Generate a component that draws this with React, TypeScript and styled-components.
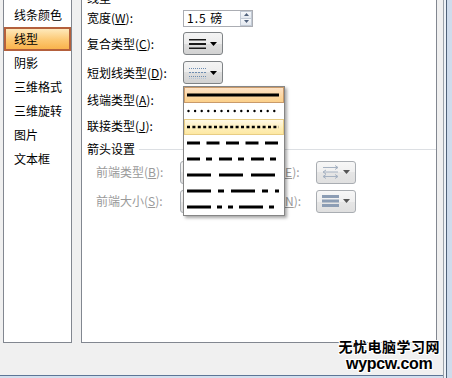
import React from "react";
import styled, { createGlobalStyle, css } from "styled-components";

const Global = createGlobalStyle`
  html, body { margin: 0; padding: 0; background: #f0f0f0; }
  body {
    font-family: "Noto Sans CJK SC", "Liberation Sans", sans-serif;
    font-size: 12px;
    color: #000;
  }
  * { box-sizing: border-box; }
`;

const Window = styled.div`
  position: relative;
  width: 452px;
  height: 378px;
  display: flex;
  background: #f0f0f0;
  overflow: hidden;
`;

const Client = styled.div`
  flex: 1;
  display: flex;
  flex-direction: column;
`;

const Panes = styled.div`
  flex: 1;
  display: flex;
  align-items: flex-start;
  gap: 9px;
  padding-left: 3px;
`;

const BottomEdge = styled.div`
  height: 3px;
  background: linear-gradient(#5d7696 0 1px, #d3dfee 1px);
`;

const Frame = styled.div`
  width: 9px;
  background: linear-gradient(
    to right,
    #9ba2aa 0 1px,
    #eef2f7 1px 3px,
    #4f6279 3px 4px,
    #cfdcec 4px
  );
`;

const NavPanel = styled.div`
  width: 69px;
  height: 343px;
  background: #fff;
  border: 1px solid #828790;
  border-top: none;
  padding-top: 3px;
  display: flex;
  flex-direction: column;
`;

const NavItem = styled.div<{ $selected?: boolean }>`
  height: 24px;
  display: flex;
  align-items: center;
  padding-left: 8px;
  border: 2px solid transparent;
  line-height: 1;
  ${(p) =>
    p.$selected &&
    css`
      border-color: #b4603c;
      background: linear-gradient(#fee9bb, #fcc873 55%, #f9b34c);
    `}
`;

const SettingsPanel = styled.div`
  width: 356px;
  height: 343px;
  background: #fff;
  border: 1px solid #828790;
  border-top: none;
  padding-left: 5px;
  display: flex;
  flex-direction: column;
`;

const Row = styled.div<{ $h: number; $mt: number; $end?: boolean }>`
  display: flex;
  align-items: ${(p) => (p.$end ? "flex-end" : "center")};
  height: ${(p) => p.$h}px;
  margin-top: ${(p) => p.$mt}px;
  line-height: 12px;
`;

const Label = styled.div<{ $w: number; $muted?: boolean; $indent?: number }>`
  width: ${(p) => p.$w}px;
  margin-left: ${(p) => p.$indent ?? 0}px;
  color: ${(p) => (p.$muted ? "#9a9a9a" : "#000")};
  white-space: nowrap;
  flex-shrink: 0;
`;

const U = styled.span`
  text-decoration: underline;
`;

const SectionTitle = styled.div`
  white-space: nowrap;
`;

const Rule = styled.div`
  flex: 1;
  height: 1px;
  margin-left: 4px;
  background: #dcdfe3;
`;

const Spinner = styled.div`
  width: 70px;
  height: 17px;
  border: 1px solid #abadb3;
  display: flex;
  align-items: center;
  padding-left: 3px;
  background: #fff;
`;

const SpinText = styled.div`
  flex: 1;
  letter-spacing: 1px;
  line-height: 1;
`;

const SpinButtons = styled.div`
  width: 12px;
  height: 15px;
  display: flex;
  flex-direction: column;
`;

const SpinBtn = styled.div`
  flex: 1;
  display: flex;
  align-items: center;
  justify-content: center;
  border: 1px solid #c2cad5;
  background: linear-gradient(#f6f8fb, #e3e8ef);
  & + & {
    border-top: none;
  }
`;

const Anchor = styled.div`
  position: relative;
`;

const DropButton = styled.div<{ $disabled?: boolean }>`
  width: 40px;
  height: 23px;
  border: 1px solid ${(p) => (p.$disabled ? "#a9adb2" : "#7f8386")};
  border-radius: 3px;
  display: flex;
  align-items: center;
  justify-content: space-between;
  padding: 0 5px 0 5px;
  background: ${(p) =>
    p.$disabled
      ? "linear-gradient(#f7f7f7, #efefef 50%, #e6e6e6 50%, #e0e0e0)"
      : "linear-gradient(#f4f4f4, #ececec 50%, #dedede 50%, #d2d2d2)"};
  flex-shrink: 0;
`;

const Menu = styled.div`
  position: absolute;
  top: 25px;
  left: 0;
  width: 102px;
  background: #fff;
  border: 1px solid #868686;
  box-shadow: 2px 2px 3px rgba(0, 0, 0, 0.35);
  z-index: 10;
  display: flex;
  flex-direction: column;
`;

const MenuItem = styled.div<{ $state?: "selected" | "hover" }>`
  height: 16px;
  display: flex;
  align-items: center;
  padding-left: 2px;
  border: 1px solid transparent;
  ${(p) =>
    p.$state === "selected" &&
    css`
      border-color: #c99a6a;
      background: linear-gradient(#fde2c6, #fcd6a0 60%, #fbd08a);
    `}
  ${(p) =>
    p.$state === "hover" &&
    css`
      border-color: #e8cd84;
      background: linear-gradient(#fff9e6, #feeeb8 60%, #fde8a2);
    `}
`;

const Watermark = styled.div`
  position: absolute;
  right: 12px;
  bottom: 6px;
  display: flex;
  flex-direction: column;
  align-items: center;
  gap: 2px;
  z-index: 20;
  color: #000;
  font-weight: bold;
  text-shadow: 1px 0 #fff, -1px 0 #fff, 0 1px #fff, 0 -1px #fff, 1px 1px #fff,
    -1px -1px #fff, 1px -1px #fff, -1px 1px #fff;
`;

const WmCn = styled.div`
  font-family: "Noto Sans CJK SC", sans-serif;
  font-size: 14px;
  line-height: 16px;
  letter-spacing: 0.5px;
`;

const WmEn = styled.div`
  font-family: "Liberation Sans", Arial, sans-serif;
  font-size: 16px;
  line-height: 16px;
  letter-spacing: -0.3px;
`;

const Arrow = ({ color = "#000" }: { color?: string }) => (
  <svg width="7" height="4" viewBox="0 0 7 4">
    <path d="M0 0 H7 L3.5 4 Z" fill={color} />
  </svg>
);

const CompoundIcon = () => (
  <svg width="18" height="14" viewBox="0 0 18 14">
    <rect x="0" y="2" width="17" height="1.5" fill="#1a1a1a" />
    <rect x="0" y="6" width="17" height="2" fill="#1a1a1a" />
    <rect x="0" y="10.5" width="17" height="1.5" fill="#1a1a1a" />
  </svg>
);

const DashIcon = () => (
  <svg width="18" height="14" viewBox="0 0 18 14">
    <line x1="0" y1="2.5" x2="17" y2="2.5" stroke="#6d8cb0" strokeWidth="1" strokeDasharray="1 1" />
    <line x1="0" y1="6.5" x2="17" y2="6.5" stroke="#6d8cb0" strokeWidth="1" strokeDasharray="2 1" />
    <line x1="0" y1="10.5" x2="17" y2="10.5" stroke="#6d8cb0" strokeWidth="1" strokeDasharray="1 1" />
    <line x1="0" y1="12.5" x2="17" y2="12.5" stroke="#b7c6d8" strokeWidth="1" strokeDasharray="1 1" />
  </svg>
);

const ArrowTypeIcon = () => (
  <svg width="18" height="14" viewBox="0 0 18 14">
    <g stroke="#a6b2c2" strokeWidth="1" fill="none">
      <line x1="1" y1="2.5" x2="16" y2="2.5" />
      <path d="M13 0.5 L16 2.5 L13 4.5" />
      <line x1="1" y1="7" x2="16" y2="7" />
      <path d="M4 5 L1 7 L4 9" />
      <line x1="1" y1="11.5" x2="16" y2="11.5" />
      <path d="M4 9.5 L1 11.5 L4 13.5" />
      <path d="M13 9.5 L16 11.5 L13 13.5" />
    </g>
  </svg>
);

const ArrowSizeIcon = () => (
  <svg width="18" height="14" viewBox="0 0 18 14">
    <rect x="0" y="1" width="17" height="3" fill="#8c9db4" />
    <rect x="0" y="5.5" width="17" height="3" fill="#8c9db4" />
    <rect x="0" y="10" width="17" height="3" fill="#8c9db4" />
  </svg>
);

const TinyTri = ({ up }: { up?: boolean }) => (
  <svg width="5" height="3" viewBox="0 0 5 3">
    <path d={up ? "M0 3 H5 L2.5 0 Z" : "M0 0 H5 L2.5 3 Z"} fill="#51627c" />
  </svg>
);

type Pattern = { dash?: string; width: number; cap?: "butt" | "round" };

const patterns: Pattern[] = [
  { width: 3 },
  { width: 2.4, dash: "0 6.6", cap: "round" },
  { width: 2.6, dash: "3 2.4" },
  { width: 3, dash: "13 6.5" },
  { width: 3, dash: "13 6 6 7" },
  { width: 3, dash: "24 8" },
  { width: 3, dash: "24 7 6 7" },
  { width: 3, dash: "24 6 5 6 5 6" },
];

const LineSample = ({ p }: { p: Pattern }) => (
  <svg width="92" height="6" viewBox="0 0 92 6">
    <line
      x1={p.cap === "round" ? 1.5 : 0}
      y1="3"
      x2="92"
      y2="3"
      stroke="#000"
      strokeWidth={p.width}
      strokeDasharray={p.dash}
      strokeLinecap={p.cap ?? "butt"}
    />
  </svg>
);

const navItems = ["线条颜色", "线型", "阴影", "三维格式", "三维旋转", "图片", "文本框"];

export default function App() {
  return (
    <>
      <Global />
      <Window>
        <Client>
          <Panes>
            <NavPanel>
              {navItems.map((t) => (
                <NavItem key={t} $selected={t === "线型"}>
                  {t}
                </NavItem>
              ))}
            </NavPanel>
            <SettingsPanel>
              <Row $h={4} $mt={0} $end>
                <SectionTitle>线型</SectionTitle>
              </Row>
              <Row $h={20} $mt={4}>
                <Label $w={96}>
                  宽度(<U>W</U>):
                </Label>
                <Spinner>
                  <SpinText>1.5 磅</SpinText>
                  <SpinButtons>
                    <SpinBtn>
                      <TinyTri up />
                    </SpinBtn>
                    <SpinBtn>
                      <TinyTri />
                    </SpinBtn>
                  </SpinButtons>
                </Spinner>
              </Row>
              <Row $h={23} $mt={4}>
                <Label $w={96}>
                  复合类型(<U>C</U>):
                </Label>
                <DropButton>
                  <CompoundIcon />
                  <Arrow />
                </DropButton>
              </Row>
              <Row $h={23} $mt={6}>
                <Label $w={96}>
                  短划线类型(<U>D</U>):
                </Label>
                <Anchor>
                  <DropButton>
                    <DashIcon />
                    <Arrow />
                  </DropButton>
                  <Menu>
                    {patterns.map((p, i) => (
                      <MenuItem
                        key={i}
                        $state={i === 0 ? "selected" : i === 2 ? "hover" : undefined}
                      >
                        <LineSample p={p} />
                      </MenuItem>
                    ))}
                  </Menu>
                </Anchor>
              </Row>
              <Row $h={22} $mt={5}>
                <Label $w={96}>
                  线端类型(<U>A</U>):
                </Label>
              </Row>
              <Row $h={22} $mt={4}>
                <Label $w={96}>
                  联接类型(<U>J</U>):
                </Label>
              </Row>
              <Row $h={16} $mt={4}>
                <SectionTitle>箭头设置</SectionTitle>
                <Rule />
              </Row>
              <Row $h={24} $mt={3}>
                <Label $w={84} $indent={9} $muted>
                  前端类型(<U>B</U>):
                </Label>
                <DropButton $disabled>
                  <ArrowTypeIcon />
                  <Arrow color="#555" />
                </DropButton>
                <Label $w={83} $indent={13} $muted>
                  后端类型(<U>E</U>):
                </Label>
                <DropButton $disabled>
                  <ArrowTypeIcon />
                  <Arrow color="#555" />
                </DropButton>
              </Row>
              <Row $h={24} $mt={5}>
                <Label $w={84} $indent={9} $muted>
                  前端大小(<U>S</U>):
                </Label>
                <DropButton $disabled>
                  <ArrowSizeIcon />
                  <Arrow color="#555" />
                </DropButton>
                <Label $w={83} $indent={13} $muted>
                  后端大小(<U>N</U>):
                </Label>
                <DropButton $disabled>
                  <ArrowSizeIcon />
                  <Arrow color="#555" />
                </DropButton>
              </Row>
            </SettingsPanel>
          </Panes>
          <BottomEdge />
        </Client>
        <Frame />
        <Watermark>
          <WmCn>无忧电脑学习网</WmCn>
          <WmEn>wypcw.com</WmEn>
        </Watermark>
      </Window>
    </>
  );
}
